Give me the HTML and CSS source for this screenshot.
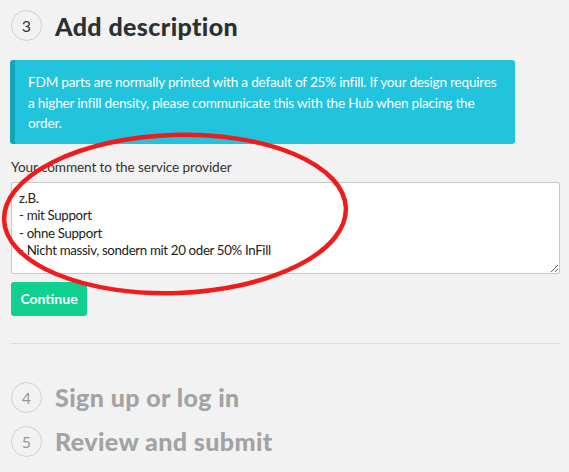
FILE: index.html
```html
<!DOCTYPE html>
<html>
<head>
<meta charset="utf-8">
<link rel="stylesheet" href="styles.css">
</head>
<body>
<div class="page">
  <div class="step">
    <span class="num">3</span>
    <h2 class="title">Add description</h2>
  </div>
  <div class="info">FDM parts are normally printed with a default of 25% infill. If your design requires a higher infill density, please communicate this with the Hub when placing the order.</div>
  <label class="label">Your comment to the service provider</label>
  <textarea class="comment">z.B.
- mit Support
- ohne Support
- Nicht massiv, sondern mit 20 oder 50% InFill</textarea>
  <button class="btn">Continue</button>
  <hr class="sep">
  <div class="step muted s4">
    <span class="num">4</span>
    <h2 class="title">Sign up or log in</h2>
  </div>
  <div class="step muted s5">
    <span class="num">5</span>
    <h2 class="title">Review and submit</h2>
  </div>
  <svg class="mark" width="569" height="472" viewBox="0 0 569 472">
    <ellipse cx="175" cy="214" rx="171" ry="79" transform="rotate(-2 175 214)" fill="none" stroke="#f01c1c" stroke-width="4.5"/>
  </svg>
</div>
</body>
</html>
```
FILE: styles.css
```css
html, body { margin: 0; padding: 0; }
body {
  background: #f2f2f2;
  font-family: Lato, "Open Sans", sans-serif;
  color: #333;
  width: 569px;
  height: 472px;
  overflow: hidden;
}
.page {
  position: relative;
  padding: 10px 9px 0 11px;
  height: 462px;
}
.step {
  display: flex;
  align-items: center;
  gap: 13px;
  height: 31px;
}
.num {
  box-sizing: border-box;
  width: 31px;
  height: 31px;
  border: 1px solid #cfcfcf;
  border-radius: 50%;
  display: flex;
  align-items: center;
  justify-content: center;
  font-size: 16px;
  color: #333;
}
.title {
  margin: 0;
  font-size: 25px;
  font-weight: 900;
  color: #2b3132;
  letter-spacing: 0.4px;
}
.info {
  margin: 19px 0 0 -1px;
  background: #21c3dd;
  border-left: 5px solid #13a5bc;
  border-radius: 3px;
  color: #fff;
  font-size: 13.6px;
  letter-spacing: -0.2px;
  line-height: 20.5px;
  padding: 12px 16px 10px 13px;
  width: 471px;
}
.label {
  display: block;
  margin-top: 15px;
  font-size: 13.6px;
  letter-spacing: -0.1px;
  line-height: 17px;
}
.comment {
  display: block;
  box-sizing: border-box;
  margin-top: 6px;
  width: 549px;
  height: 92px;
  border: 1px solid #c8c8c8;
  border-radius: 2px;
  background: #fff;
  font-family: Lato, "Open Sans", sans-serif;
  font-size: 13.3px;
  letter-spacing: -0.35px;
  line-height: 17.5px;
  color: #222;
  padding: 7px 7px;
  resize: vertical;
}
.btn {
  display: block;
  margin-top: 8px;
  width: 76px;
  height: 34px;
  border: none;
  border-radius: 3px;
  background: #0fcf91;
  color: #fff;
  font-family: Lato, "Open Sans", sans-serif;
  font-weight: 700;
  font-size: 14px;
  padding: 0;
}
.sep {
  margin: 27px 0 0 0;
  border: none;
  height: 1px;
  background: #dcdcdc;
  width: 549px;
}
.s4 { margin-top: 38px; }
.s5 { margin-top: 13px; }
.muted .num { color: #999; border-color: #d0d0d0; }
.muted .title { color: #a3a3a3; }
.mark {
  position: absolute;
  left: 0;
  top: 0;
  pointer-events: none;
}
```
